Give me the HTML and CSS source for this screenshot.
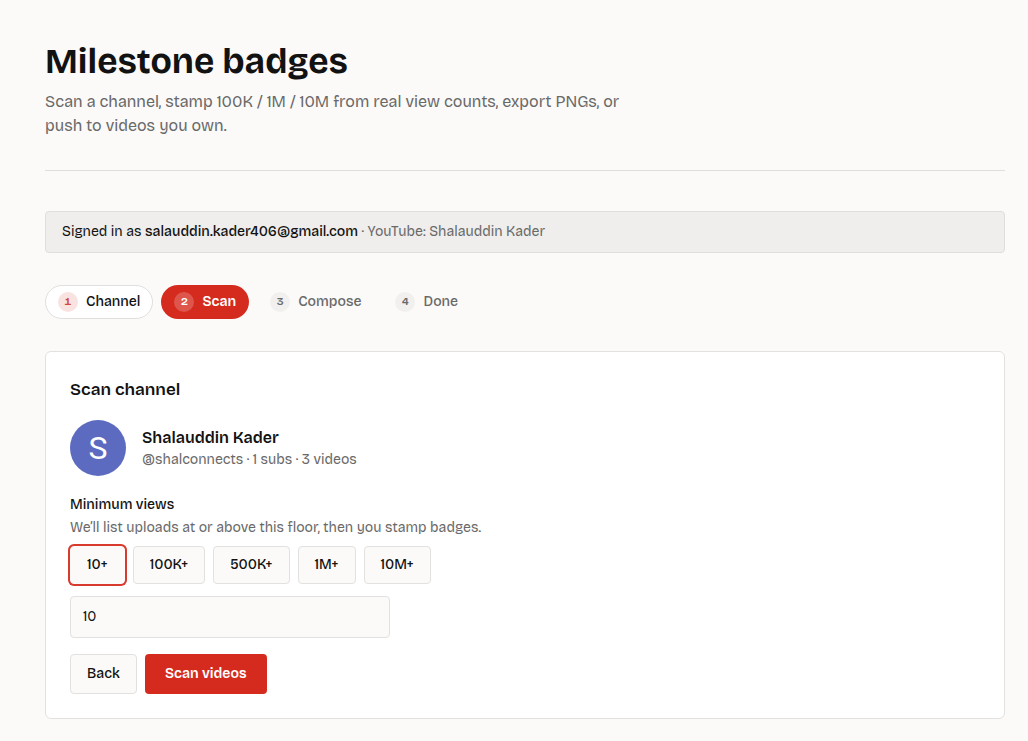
FILE: index.html
```html
<!DOCTYPE html>
<html lang="en">
<head>
<meta charset="utf-8">
<meta name="viewport" content="width=device-width, initial-scale=1">
<title>Milestone badges</title>
<link rel="stylesheet" href="styles.css">
</head>
<body>
<main class="page">
  <header class="page-header">
    <h1 class="title">Milestone badges</h1>
    <p class="lead">Scan a channel, stamp 100K / 1M / 10M from real view counts, export PNGs, or push to videos you own.</p>
  </header>

  <p class="account">Signed in as <strong class="account-email">salauddin.kader406@gmail.com</strong> <span class="muted">· YouTube: Shalauddin Kader</span></p>

  <nav class="steps" aria-label="Progress">
    <button type="button" class="step step-past"><span class="step-number">1</span><span>Channel</span></button>
    <button type="button" class="step step-current" aria-current="step"><span class="step-number">2</span><span>Scan</span></button>
    <button type="button" class="step"><span class="step-number">3</span><span>Compose</span></button>
    <button type="button" class="step"><span class="step-number">4</span><span>Done</span></button>
  </nav>

  <section class="card">
    <h2 class="card-title">Scan channel</h2>
    <div class="channel">
      <div class="avatar" aria-hidden="true">S</div>
      <div class="channel-text">
        <p class="channel-name">Shalauddin Kader</p>
        <p class="channel-meta">@shalconnects · 1 subs · 3 videos</p>
      </div>
    </div>
    <label class="field-label" for="views">Minimum views</label>
    <p class="field-hint">We’ll list uploads at or above this floor, then you stamp badges.</p>
    <div class="presets">
      <button type="button" class="button preset preset-selected">10+</button>
      <button type="button" class="button preset">100K+</button>
      <button type="button" class="button preset">500K+</button>
      <button type="button" class="button preset">1M+</button>
      <button type="button" class="button preset">10M+</button>
    </div>
    <input class="field" id="views" type="text" inputmode="numeric" value="10">
    <div class="actions">
      <button type="button" class="button">Back</button>
      <button type="button" class="button button-primary">Scan videos</button>
    </div>
  </section>
</main>
</body>
</html>
```

FILE: styles.css
```css
* { box-sizing: border-box; }

body {
  margin: 0;
  background: #fbfaf8;
  color: #121212;
  font-family: "Bricolage Grotesque", "Work Sans", Inter, "Liberation Sans", sans-serif;
  font-size: 14px;
  line-height: 20px;
}

h1, h2, p { margin: 0; }
button, input { font: inherit; color: inherit; }
button { cursor: pointer; }

.page { padding: 40px 23px 22px 45px; }

.page-header {
  padding-bottom: 32px;
  border-bottom: 1px solid #dededd;
}

.title {
  font-size: 35px;
  line-height: 42px;
  font-weight: 700;
}

.lead {
  max-width: 600px;
  margin-top: 8px;
  color: #696969;
  font-size: 16px;
  line-height: 24px;
}

.muted { color: #696969; }

.account {
  margin-top: 40px;
  padding: 10px 16px;
  border: 1px solid #dededd;
  border-radius: 4px;
  background: #efeeec;
}

.account-email { font-weight: 500; }

.steps {
  display: flex;
  flex-wrap: wrap;
  gap: 8px;
  margin-top: 32px;
}

.step {
  display: flex;
  align-items: center;
  gap: 8px;
  padding: 6px 12px;
  border: 1px solid transparent;
  border-radius: 17px;
  background: none;
  color: #696969;
  font-weight: 500;
}

.step-number {
  width: 20px;
  height: 20px;
  border-radius: 50%;
  background: #f1f0ee;
  font-size: 11px;
  font-weight: 600;
  font-variant-numeric: tabular-nums;
}

.step-past {
  border-color: #e0dfde;
  background: #fff;
  color: #121212;
}

.step-past .step-number { background: #f8e3e1; color: #d0483c; }

.step-current { background: #d52b1e; color: #fff; font-weight: 600; }
.step-current .step-number { background: #de554b; }

.card {
  margin-top: 32px;
  padding: 24px;
  border: 1px solid #e2e1df;
  border-radius: 6px;
  background: #fff;
}

.card-title { font-size: 17px; line-height: 28px; font-weight: 600; }

.channel {
  display: flex;
  align-items: center;
  gap: 16px;
  margin: 16px 0 19px;
}

.avatar {
  width: 56px;
  height: 56px;
  border-radius: 50%;
  background: #5c6bc0;
  color: #fff;
  font-family: Roboto, sans-serif;
  font-size: 32px;
  line-height: 56px;
  text-align: center;
}

.channel-name { font-size: 16px; line-height: 24px; font-weight: 600; }
.channel-meta { color: #696969; }

.field-label { display: block; font-weight: 500; }
.field-hint { margin-top: 3px; color: #696969; }

.button {
  padding: 9px 16px;
  border: 1px solid #e2e1df;
  border-radius: 4px;
  background: #fbfaf8;
  font-weight: 500;
}

.presets {
  display: flex;
  flex-wrap: wrap;
  gap: 8px;
  margin-top: 8px;
}

.preset { padding: 8px 16px; }
.preset-selected { border-color: #fbfaf8; box-shadow: 0 0 0 2px #d93a2e; }

.field {
  display: block;
  width: 100%;
  max-width: 320px;
  margin-top: 12px;
  padding: 10px 12px;
  border: 1px solid #e2e1df;
  border-radius: 4px;
  background: #fbfaf8;
}

.actions { display: flex; gap: 8px; margin-top: 16px; }

.button-primary {
  padding: 10px 20px;
  border: 0;
  background: #d52b1e;
  color: #fff;
  font-weight: 600;
}
```
